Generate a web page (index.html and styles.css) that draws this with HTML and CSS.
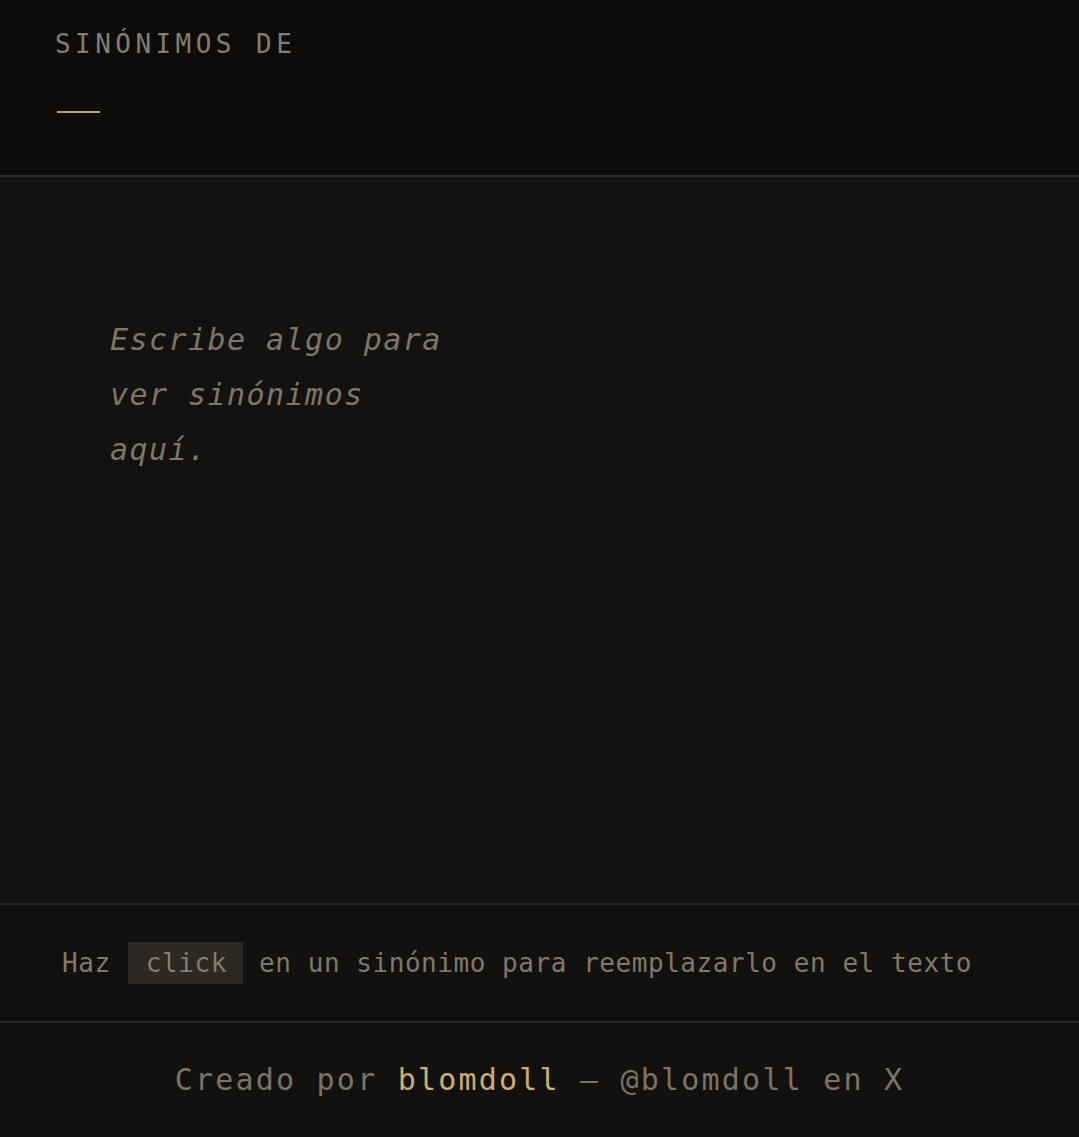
FILE: index.html
```html
<!DOCTYPE html>
<html lang="es">
<head>
<meta charset="utf-8">
<title>Sinónimos</title>
<link rel="stylesheet" href="styles.css">
</head>
<body>
<div class="page">
  <header class="header">
    <div class="title">SINÓNIMOS DE</div>
    <div class="accent"></div>
  </header>
  <main class="main">
    <p class="empty">Escribe algo para ver sinónimos aquí.</p>
  </main>
  <section class="hint">
    Haz <span class="kbd">click</span> en un sinónimo para reemplazarlo en el texto
  </section>
  <footer class="footer">
    Creado por <span class="author">blomdoll</span> — @blomdoll en X
  </footer>
</div>
</body>
</html>
```

FILE: styles.css
```css
html, body {
  margin: 0;
  padding: 0;
  background: #131211;
}
body {
  font-family: "DejaVu Sans Mono", "Liberation Mono", monospace;
  color: #857c6e;
}
.page {
  display: flex;
  flex-direction: column;
  min-height: 1137px;
}
.header {
  background: #0d0c0b;
  padding: 29px 55px 62px;
  border-bottom: 2px solid #2e2a23;
}
.title {
  font-size: 26px;
  line-height: 30px;
  letter-spacing: 4.45px;
  color: #857d70;
}
.accent {
  margin-top: 52px;
  margin-left: 2px;
  width: 43px;
  height: 2px;
  background: #c6a467;
}
.main {
  height: 591px;
  padding: 135px 0 0 110px;
  background: #131211;
  border-bottom: 2px solid #2b2620;
}
.empty {
  margin: 0;
  width: 360px;
  font-size: 30px;
  line-height: 55px;
  letter-spacing: 1.45px;
  font-style: italic;
  color: #807667;
}
.hint {
  height: 42px;
  padding: 37px 0 37px 62px;
  font-size: 26px;
  line-height: 42px;
  letter-spacing: 0.55px;
  color: #817868;
  background: #121110;
  border-bottom: 2px solid #2b2620;
  white-space: nowrap;
}
.kbd {
  display: inline-block;
  margin-left: 1px;
  padding: 0 16px 0 18px;
  background: #2d2822;
  color: #857c6e;
  line-height: 42px;
  vertical-align: top;
}
.footer {
  flex: 1;
  padding: 37px 0;
  font-size: 30px;
  line-height: 40px;
  letter-spacing: 2.2px;
  text-align: center;
  color: #7c7364;
  background: #121110;
  white-space: nowrap;
}
.author {
  color: #cdae72;
}
```
